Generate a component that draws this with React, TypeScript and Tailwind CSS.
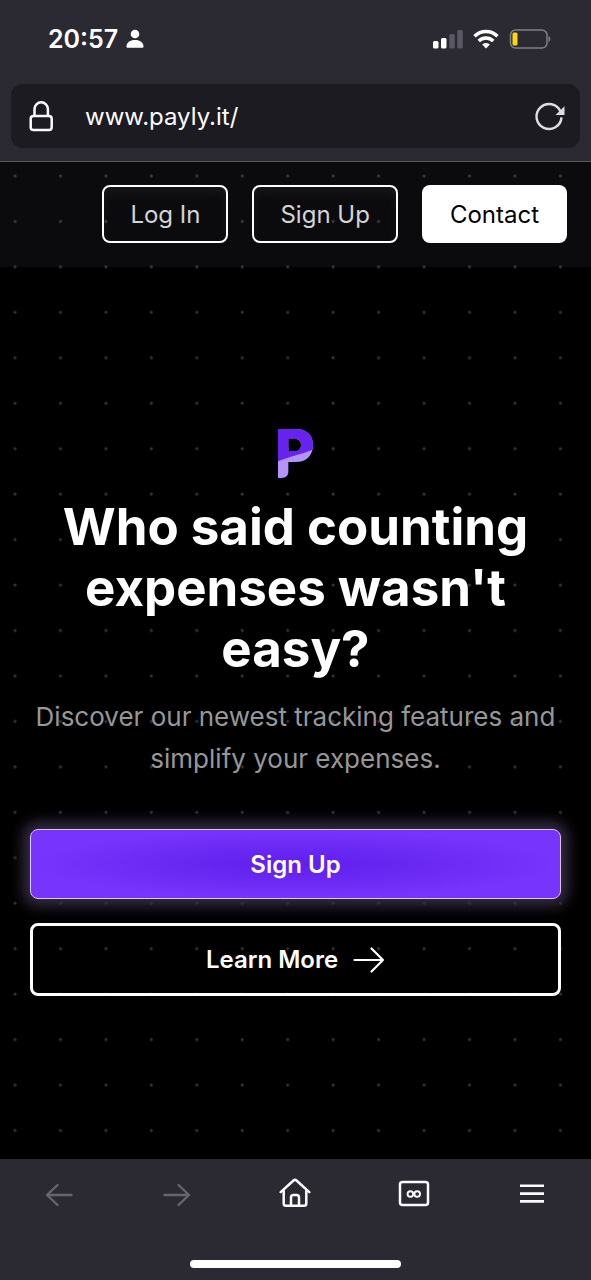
import React from "react";

const P_SHAPE =
  "M99 57H154C184 57 204 75 204 104C204 137 184 156 152 156H130V184C130 198 122 204 110 204H99ZM130 87V123H150C161 123 168 117 168 105S161 87 150 87Z";

function StatusBar() {
  return (
    <div className="flex h-[84px] items-center justify-between pr-10 pb-1.5 pl-12">
      <div className="flex items-center gap-2">
        <span className="text-[25px] font-semibold leading-8 text-white">20:57</span>
        <svg viewBox="0 0 18 20" className="h-5 w-[18px]" fill="white" aria-hidden="true">
          <circle cx="9" cy="5" r="4.3" />
          <path d="M.5 17.5C.5 13.5 4 11 9 11s8.500 2.500 8.500 6.500c0 .8-.5 1.300-1.300 1.300H1.800c-.8 0-1.300-.5-1.300-1.300Z" />
        </svg>
      </div>
      <div className="flex items-center gap-2.5">
        <svg viewBox="0 0 30 20" className="h-5 w-[30px]" aria-hidden="true">
          <rect x="0" y="12" width="5.500" height="7.500" rx="1.500" fill="white" />
          <rect x="8" y="9" width="5.500" height="10.500" rx="1.500" fill="white" />
          <rect x="16.300" y="5" width="5.500" height="14.500" rx="1.500" fill="#5a5862" />
          <rect x="24.300" y="1" width="5.500" height="18.500" rx="1.500" fill="#5a5862" />
        </svg>
        <svg viewBox="0 0 26 20" className="h-5 w-[26px]" fill="none" stroke="white" strokeWidth="3.500" aria-hidden="true">
          <path d="M1.500 7.300C8 1 18 1 24.500 7.300" />
          <path d="M5.700 12C10 8 16 8 20.300 12" />
          <path d="M13 19.500L9.200 15.500C11.400 13.500 14.600 13.500 16.800 15.500Z" fill="white" stroke="none" />
        </svg>
        <svg viewBox="0 0 42 20" className="h-5 w-[42px]" aria-hidden="true">
          <rect x="1.500" y="1" width="36.500" height="18" rx="5" fill="none" stroke="#807e87" strokeWidth="1.500" />
          <rect x="3.500" y="3.500" width="5" height="13" rx="1.500" fill="#ffd60a" />
          <path d="M39.500 7C42 8.300 42 11.700 39.500 13Z" fill="#807e87" />
        </svg>
      </div>
    </div>
  );
}

function AddressBar() {
  return (
    <div className="px-[11px] pb-[13px]">
      <div className="flex h-16 items-center rounded-xl bg-[#1c1b22] px-[14px]">
        <svg viewBox="0 0 32 34" className="h-[34px] w-8 shrink-0" fill="none" stroke="#fbfbfe" strokeWidth="2.500" aria-hidden="true">
          <rect x="5.700" y="17" width="21" height="14" rx="2.800" />
          <path d="M9.500 17V10a6.700 6.700 0 0 1 13.400 0v7" />
        </svg>
        <input
          aria-label="Address"
          defaultValue="www.payly.it/"
          className="ml-7 min-w-0 flex-1 bg-transparent pt-0.5 text-2xl leading-8 text-[#fbfbfe] outline-none"
        />
        <button type="button" aria-label="Reload" className="shrink-0">
          <svg viewBox="0 0 32 32" className="size-8" fill="none" stroke="#dddbe5" strokeWidth="2.500" aria-hidden="true">
            <path d="M27.500 17.300A12.500 12.500 0 1 1 26.500 11.500" />
            <path d="M30.500 6.300V15H21.500Z" fill="#dddbe5" stroke="none" />
          </svg>
        </button>
      </div>
    </div>
  );
}

function SiteNav() {
  return (
    <nav className="flex justify-end gap-6 bg-[#cfd8ff]/[0.05] px-6 pt-[23px] pb-6">
      <a href="#login" className="flex h-[58px] items-center rounded-lg border-2 border-white px-[26px] pt-0.5 text-2xl text-[#d4d4d4] shadow-[inset_0_6px_12px_#ffffff0d]">
        Log In
      </a>
      <a href="#signup" className="flex h-[58px] items-center rounded-lg border-2 border-white px-[26px] pt-0.5 text-2xl text-[#d4d4d4] shadow-[inset_0_6px_12px_#ffffff0d]">
        Sign Up
      </a>
      <a href="#contact" className="flex h-[58px] items-center rounded-lg bg-white px-7 pt-0.5 text-2xl text-black">
        Contact
      </a>
    </nav>
  );
}

function Logo() {
  return (
    <svg viewBox="99 57 105 147" className="h-[49px] w-[35px]" role="img" aria-label="Payly">
      <clipPath id="logo-top">
        <path d="M90 50H210V116C175 132 140 137 90 157Z" />
      </clipPath>
      <path d={P_SHAPE} fill="#b493fc" fillRule="evenodd" />
      <path d={P_SHAPE} fill="#6722f0" fillRule="evenodd" clipPath="url(#logo-top)" />
    </svg>
  );
}

function Hero() {
  return (
    <main className="flex flex-1 flex-col items-center justify-center px-[30px] pb-0.5 text-center">
      <Logo />
      <h1 className="mt-[18px] text-[51px] leading-[61px] font-bold text-white">
        Who said counting expenses wasn't easy?
      </h1>
      <p className="mt-[17px] text-[26px] leading-[42px] text-[#979797]">
        Discover our newest tracking features and simplify your expenses.
      </p>
      <a
        href="#signup"
        className="mt-[49px] flex h-[70px] w-full items-center justify-center rounded-lg border border-[#dcc9ff] bg-[radial-gradient(ellipse_at_center,#5f1eeb_0%,#7634fc_70%)] pt-0.5 text-2xl font-semibold text-white shadow-[0_0_14px_7px_#352d45]"
      >
        Sign Up
      </a>
      <a
        href="#more"
        className="mt-6 flex h-[73px] w-full items-center justify-center gap-[15px] rounded-lg border-3 border-white pt-0.5 text-2xl font-semibold text-white"
      >
        Learn More
        <svg viewBox="0 0 32 28" className="h-7 w-8" fill="none" stroke="white" strokeWidth="2.200" strokeLinecap="round" strokeLinejoin="round" aria-hidden="true">
          <path d="M1.500 14H30M18.500 2.500L30 14L18.500 25.500" />
        </svg>
      </a>
    </main>
  );
}

function Toolbar() {
  return (
    <footer className="bg-[#2b2a33] pb-3">
      <div className="grid h-[70px] grid-cols-5 place-items-center">
        <button type="button" aria-label="Back">
          <svg viewBox="0 0 32 32" className="size-8" fill="none" stroke="#66646e" strokeWidth="2.400" strokeLinecap="round" strokeLinejoin="round">
            <path d="M28.500 17H4M14.500 7L4 17L14.500 27" />
          </svg>
        </button>
        <button type="button" aria-label="Forward">
          <svg viewBox="0 0 32 32" className="size-8" fill="none" stroke="#66646e" strokeWidth="2.400" strokeLinecap="round" strokeLinejoin="round">
            <path d="M3.500 17H28M17.500 7L28 17L17.500 27" />
          </svg>
        </button>
        <button type="button" aria-label="Home">
          <svg viewBox="0 0 36 32" className="h-8 w-9" fill="none" stroke="#fbfbfe" strokeWidth="2.500" strokeLinecap="round" strokeLinejoin="round">
            <path d="M3.700 14.200L16.500 2.500Q18 1.200 19.500 2.500L32.300 14.200" />
            <path d="M6.700 13V25.500Q6.700 27.800 9 27.800H27Q29.300 27.800 29.300 25.500V13" />
            <path d="M14 27.800V19.500Q14 17 16.500 17H19.500Q22 17 22 19.500V27.800" />
          </svg>
        </button>
        <button type="button" aria-label="Private tabs">
          <svg viewBox="0 0 32 28" className="h-7 w-8" fill="none" stroke="#fbfbfe" strokeWidth="2.500">
            <rect x="2" y="2" width="28" height="23" rx="2.500" />
            <g strokeWidth="1.900">
              <circle cx="12.400" cy="14" r="2.800" />
              <circle cx="19.200" cy="14" r="2.800" />
            </g>
          </svg>
        </button>
        <button type="button" aria-label="Menu">
          <svg viewBox="0 0 24 20" className="h-5 w-6" stroke="#fbfbfe" strokeWidth="2.600">
            <path d="M0 1.800H24M0 9.600H24M0 17.400H24" />
          </svg>
        </button>
      </div>
      <div className="mx-auto mt-[31px] h-2 w-[211px] max-w-full rounded-full bg-white" />
    </footer>
  );
}

export default function App() {
  return (
    <div className="flex min-h-screen flex-col bg-black font-['Inter',sans-serif]">
      <header className="border-b border-[#5b5a60] bg-[#2b2a33]">
        <StatusBar />
        <AddressBar />
      </header>
      <div className="flex flex-1 flex-col bg-[radial-gradient(circle_at_15px_14px,#333333_1px,transparent_2px)] bg-[length:calc(100vw/13)_calc(100vw/13)]">
        <SiteNav />
        <Hero />
      </div>
      <Toolbar />
    </div>
  );
}
